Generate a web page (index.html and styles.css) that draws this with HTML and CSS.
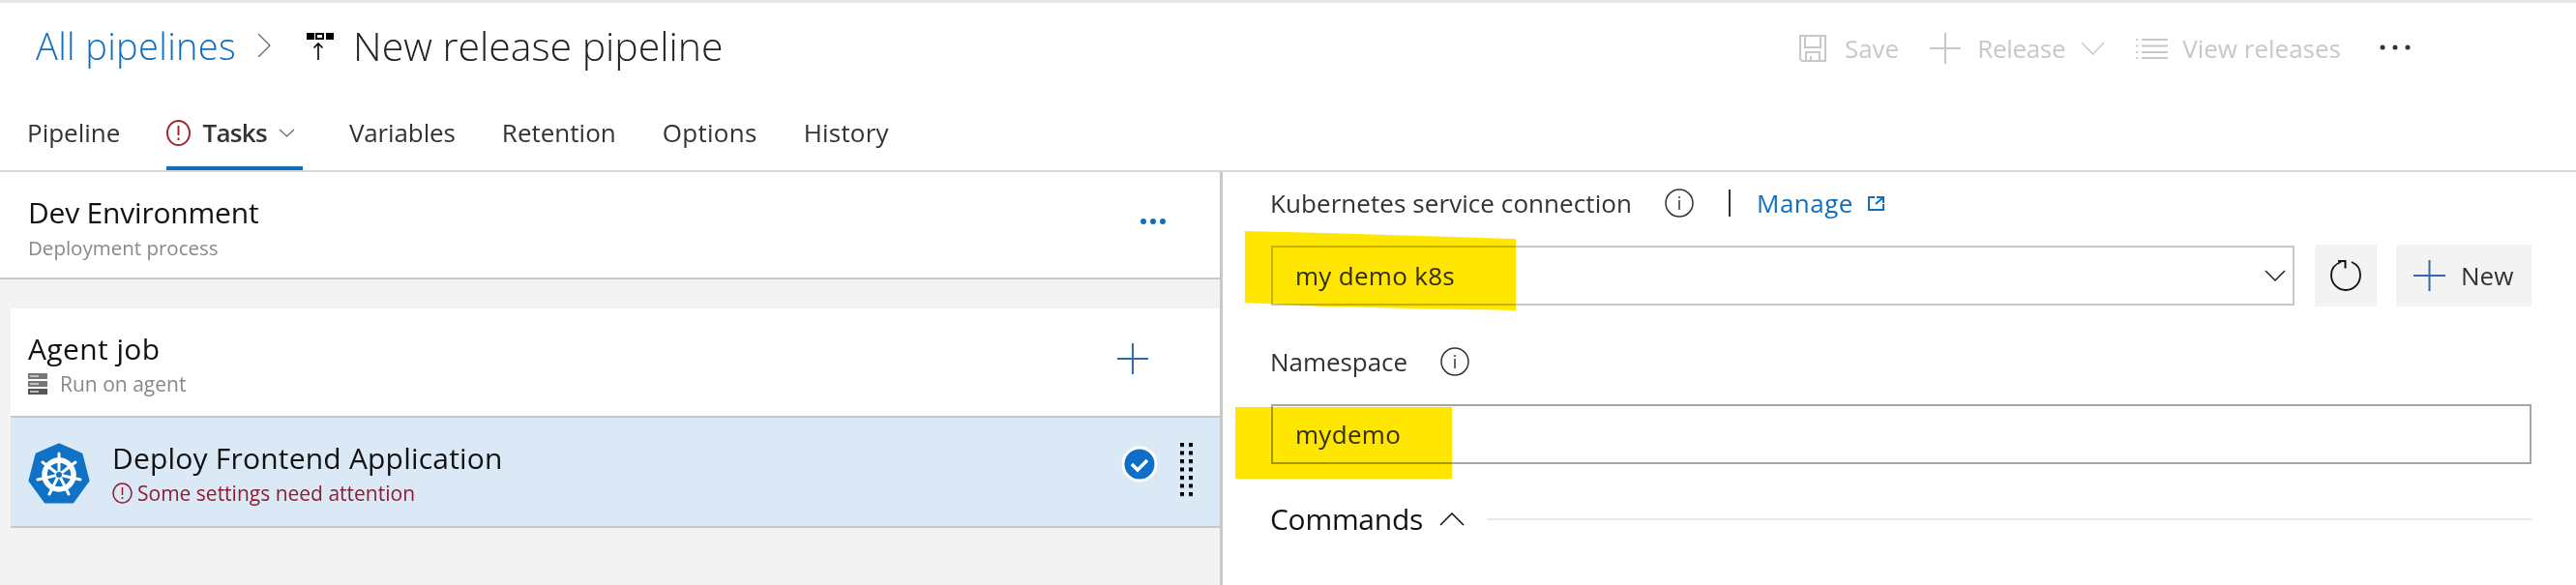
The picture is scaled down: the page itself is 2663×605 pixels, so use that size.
FILE: index.html
```html
<!DOCTYPE html>
<html lang="en">
<head>
    <title>New release pipeline</title>
    <link rel="stylesheet" href="styles.css">
</head>
<body>
    <!-- Header -->
    <header class="header">
        <div class="titlebar">
            <a class="crumb">All pipelines</a>
            <svg class="crumb-sep" width="14" height="24" viewBox="0 0 14 24"><path d="M1 0l12 12L1 24" fill="none" stroke="#666" stroke-width="1.3"/></svg>
            <svg class="pipe-icon" width="28" height="28" viewBox="0 0 28 28">
                <rect x="0" y="0" width="8" height="7" fill="#000"/>
                <rect x="10" y="1" width="7" height="5" fill="none" stroke="#000" stroke-width="2"/>
                <rect x="20" y="0" width="8" height="7" fill="#000"/>
                <path d="M12 28V11M7.5 15.5L12 11l4.500 4.500" fill="none" stroke="#000" stroke-width="1.6"/>
            </svg>
            <h1 class="title">New release pipeline</h1>

            <div class="toolbar">
                <svg class="tool-save" width="28" height="28" viewBox="0 0 28 28" fill="none" stroke="#c8c8c8" stroke-width="2">
                    <path d="M1 1h26v26H3l-2-2z"/>
                    <path d="M6 1v12h16V1"/>
                    <path d="M7 27V18h14v9M12 27v-5"/>
                </svg>
                <span class="tool-text tool-save-text">Save</span>
                <svg class="tool-plus" width="32" height="32" viewBox="0 0 32 32"><path d="M16 0v32M0 16h32" stroke="#c8c8c8" stroke-width="2"/></svg>
                <span class="tool-text tool-release-text">Release</span>
                <svg class="tool-chev" width="25" height="14" viewBox="0 0 25 14"><path d="M1 1l11.500 12L24 1" fill="none" stroke="#c8c8c8" stroke-width="1.500"/></svg>
                <svg class="tool-list" width="33" height="22" viewBox="0 0 33 22" stroke="#c8c8c8" stroke-width="2">
                    <path d="M0 2h3M0 8.500h3M0 15h3M0 21h3" stroke-dasharray="1.500 1"/>
                    <path d="M6 2h27M6 8.500h27M6 15h27M6 21h27"/>
                </svg>
                <span class="tool-text tool-view-text">View releases</span>
                <svg class="tool-more" width="32" height="6" viewBox="0 0 32 6" fill="#333"><circle cx="3" cy="3" r="2.500"/><circle cx="16" cy="3" r="2.500"/><circle cx="29" cy="3" r="2.500"/></svg>
            </div>
        </div>

        <!-- Tabs -->
        <nav class="tabs">
            <a class="tab tab-pipeline">Pipeline</a>
            <a class="tab tab-active">
                <svg width="25" height="27" viewBox="0 0 25 27"><ellipse cx="12.500" cy="13.500" rx="11.500" ry="12.500" fill="none" stroke="#a4262c" stroke-width="2"/><path d="M12.500 6v10M12.500 18.500v2.500" stroke="#a4262c" stroke-width="2"/></svg>
                <span class="tab-tasks">Tasks</span>
                <svg width="17" height="9" viewBox="0 0 17 9"><path d="M1 1l7.500 7L16 1" fill="none" stroke="#666" stroke-width="1.200"/></svg>
            </a>
            <a class="tab tab-variables">Variables</a>
            <a class="tab tab-retention">Retention</a>
            <a class="tab tab-options">Options</a>
            <a class="tab tab-history">History</a>
        </nav>
    </header>

    <main class="main">
        <!-- Left panel -->
        <section class="left">
            <div class="stage">
                <div class="rowtext">
                    <div class="row-title stage-title">Dev Environment</div>
                    <div class="row-sub stage-sub">Deployment process</div>
                </div>
                <svg width="26" height="6" viewBox="0 0 26 6" fill="#106ebe"><circle cx="3" cy="3" r="3"/><circle cx="13" cy="3" r="3"/><circle cx="23" cy="3" r="3"/></svg>
            </div>

            <div class="jobs">
                <div class="job">
                    <div class="rowtext">
                        <div class="row-title agent-title">Agent job</div>
                        <div class="row-sub agent-sub">
                            <svg width="20" height="22" viewBox="0 0 20 22">
                                <rect x="0" y="0" width="20" height="6" fill="#777"/>
                                <rect x="0" y="8" width="20" height="6" fill="#777"/>
                                <rect x="0" y="16" width="20" height="6" fill="#555"/>
                                <path d="M2 3h9M2 11h9M2 19h9" stroke="#ddd" stroke-width="1.500"/>
                            </svg>
                            <span>Run on agent</span>
                        </div>
                    </div>
                    <svg width="32" height="32" viewBox="0 0 32 32"><path d="M16 0v32M0 16h32" stroke="#2f6ba8" stroke-width="2"/></svg>
                </div>

                <div class="task">
                    <svg class="k8s" width="64" height="64" viewBox="0 0 64 64">
                        <path d="M32 2l23 10 7 27-16 22H18L2 39l7-27z" fill="#0f72c4" stroke="#0f72c4" stroke-width="3" stroke-linejoin="round"/>
                        <circle cx="32" cy="33" r="15" fill="none" stroke="#fff" stroke-width="5.500"/>
                        <g stroke="#fff" stroke-width="3" stroke-linecap="round">
                            <path d="M32 33V11M32 33l17-13M32 33l22 5M32 33l10 20M32 33L22 53M32 33l-22 5M32 33L15 20"/>
                        </g>
                        <circle cx="32" cy="33" r="3" fill="#0f72c4"/>
                    </svg>
                    <div class="rowtext">
                        <div class="row-title deploy-title">Deploy Frontend Application</div>
                        <div class="row-sub deploy-sub">
                            <svg width="21" height="22" viewBox="0 0 21 22"><ellipse cx="10.500" cy="11" rx="9.500" ry="10" fill="none" stroke="#8f1d2c" stroke-width="1.500"/><path d="M10.500 5v8M10.500 15v2" stroke="#8f1d2c" stroke-width="1.500"/></svg>
                            <span>Some settings need attention</span>
                        </div>
                    </div>
                    <svg class="check" width="38" height="38" viewBox="0 0 38 38">
                        <circle cx="19" cy="19" r="18.500" fill="#fff"/>
                        <circle cx="19" cy="19" r="15.500" fill="#0f6fc6"/>
                        <path d="M11 19l6 6 10-10" fill="none" stroke="#fff" stroke-width="3.500"/>
                    </svg>
                    <svg class="grip" width="13" height="56" viewBox="0 0 13 56">
                        <defs><pattern id="gripDots" width="9" height="8.500" patternUnits="userSpaceOnUse"><rect width="4" height="4" fill="#000"/></pattern></defs>
                        <rect width="13" height="56" fill="url(#gripDots)"/>
                    </svg>
                </div>
            </div>
        </section>

        <!-- Right panel -->
        <section class="right">
            <div class="label-row">
                <label class="field-label kube-label">Kubernetes service connection</label>
                <svg class="info" width="30" height="30" viewBox="0 0 30 30"><circle cx="15" cy="15" r="14" fill="none" stroke="#333" stroke-width="1.500"/><path d="M15 12v10M15 8v2" stroke="#333" stroke-width="1.500"/></svg>
                <span class="pipe-sep"></span>
                <a class="manage">Manage</a>
                <svg class="ext" width="17" height="15" viewBox="0 0 17 15" fill="none" stroke="#106ebe" stroke-width="2"><path d="M7 1H1v13h15V8M9 1h7v6M16 1L8 8"/></svg>
            </div>

            <div class="select-row">
                <div class="select">
                    <span class="select-value">my demo k8s</span>
                    <svg width="22" height="12" viewBox="0 0 22 12"><path d="M1 1l10 10L21 1" fill="none" stroke="#222" stroke-width="1.500"/></svg>
                </div>
                <button class="btn btn-refresh">
                    <svg width="34" height="34" viewBox="0 0 34 34" fill="none" stroke="#111" stroke-width="1.800"><path d="M23 3c6 2.500 9 7.500 9 13.500C32 25 25.500 32 17 32S2 25 2 16.500C2 10 6 5 12 3"/><path d="M9 2h7.500v7.500" stroke-width="2"/></svg>
                </button>
                <button class="btn btn-new">
                    <svg width="33" height="32" viewBox="0 0 33 32"><path d="M16.500 0v32M0 16h33" stroke="#2f6ba8" stroke-width="2"/></svg>
                    <span>New</span>
                </button>
            </div>

            <div class="label-row ns-row">
                <label class="field-label ns-label">Namespace</label>
                <svg class="info" width="30" height="30" viewBox="0 0 30 30"><circle cx="15" cy="15" r="14" fill="none" stroke="#333" stroke-width="1.500"/><path d="M15 12v10M15 8v2" stroke="#333" stroke-width="1.500"/></svg>
            </div>
            <div class="input"><span class="input-value">mydemo</span></div>

            <div class="section-head">
                <span class="section-title">Commands</span>
                <svg width="26" height="14" viewBox="0 0 26 14"><path d="M1 13L13 1l12 12" fill="none" stroke="#111" stroke-width="1.500"/></svg>
                <span class="section-line"></span>
            </div>

            <!-- Marcador amarelo por cima dos campos -->
            <div class="marker marker-select"></div>
            <div class="marker marker-input"></div>
        </section>
    </main>
</body>
</html>
```
FILE: styles.css
```css
/* Geral */
* {
    margin: 0;
    padding: 0;
    box-sizing: border-box;
    font-family: "Open Sans", "Noto Sans", sans-serif;
}

body {
    width: 2663px;
    height: 605px;
    overflow: hidden;
    background-color: #fff;
    color: #333;
}

svg {
    display: block;
    flex: none;
}

/* Header */
.header {
    height: 178px;
    border-top: 3px solid #e6e6e6;
    border-bottom: 2px solid #d8d8d8;
}

.titlebar {
    height: 94px;
    display: flex;
    align-items: center;
    padding: 0 0 6px 37px;
}

.crumb {
    font-size: 38px;
    font-weight: 300;
    line-height: 52px;
    letter-spacing: 0.33px;
    color: #106ebe;
}

.crumb-sep {
    margin-left: 22px;
}

.pipe-icon {
    margin-left: 37px;
    margin-top: 2px;
}

.title {
    margin-left: 20px;
    font-size: 41px;
    font-weight: 300;
    line-height: 52px;
    color: #222;
}

.toolbar {
    margin-left: auto;
    padding-right: 171px;
    padding-top: 6px;
    display: flex;
    align-items: center;
    color: #c8c8c8;
}

.tool-text {
    font-size: 26px;
    line-height: 36px;
}

.tool-save-text { margin-left: 19px; }
.tool-plus { margin-left: 32px; }
.tool-release-text { margin-left: 17px; letter-spacing: -0.32px; }
.tool-chev { margin-left: 16px; }
.tool-list { margin-left: 32px; }
.tool-view-text { margin-left: 15px; }
.tool-more { margin-left: 40px; margin-top: -2px; }

/* Tabs */
.tabs {
    display: flex;
    gap: 48px;
    height: 79px;
    padding-left: 28px;
}

.tab {
    display: flex;
    align-items: center;
    padding-top: 5px;
    border-bottom: 4px solid transparent;
    font-size: 26px;
    color: #333;
}

.tab-active {
    gap: 12px;
    padding-right: 8px;
    border-bottom-color: #106ebe;
}

.tab-tasks {
    font-weight: 600;
    letter-spacing: -0.7px;
}

.tab-variables { letter-spacing: -0.12px; }
.tab-options { letter-spacing: 0.29px; }
.tab-history { letter-spacing: 0.19px; }

/* Painel esquerdo */
.main {
    display: flex;
    height: 427px;
}

.left {
    width: 1264px;
    background-color: #f3f3f3;
    border-right: 3px solid #c8c8c8;
}

.stage {
    height: 111px;
    display: flex;
    justify-content: space-between;
    align-items: flex-start;
    padding: 0 56px 0 29px;
    background-color: #fff;
    border-bottom: 2px solid #c8c8c8;
}

.stage svg {
    margin-top: 48px;
}

.rowtext {
    padding-top: 22px;
}

.row-title {
    font-size: 30px;
    line-height: 40px;
    color: #111;
}

.row-sub {
    display: flex;
    align-items: center;
    font-size: 21px;
    line-height: 32px;
    color: #888;
}

.stage-title { letter-spacing: -0.2px; }
.stage-sub { font-size: 20.5px; }
.agent-title { letter-spacing: 0.4px; }
.deploy-title { letter-spacing: 0.2px; }

.agent-sub { gap: 13px; }

.deploy-sub {
    gap: 5px;
    color: #8f1d2c;
}

.jobs {
    margin: 30px 0 0 11px;
}

.job {
    height: 113px;
    display: flex;
    justify-content: space-between;
    align-items: flex-start;
    padding: 0 74px 0 18px;
    background-color: #fff;
    border-bottom: 2px solid #c8c8c8;
}

.job > svg {
    margin-top: 36px;
}

.task {
    height: 114px;
    display: flex;
    align-items: flex-start;
    padding: 0 28px 0 18px;
    background-color: #dbe8f6;
    border-bottom: 2px solid #c4c8ce;
}

.k8s {
    margin: 26px 23px 0 0;
}

.check {
    margin: 29px 0 0 auto;
}

.grip {
    margin: 26px 0 0 23px;
}

/* Painel direito */
.right {
    position: relative;
    flex: 1;
    padding: 14px 46px 0 50px;
}

.label-row {
    display: flex;
    align-items: center;
    height: 36px;
}

.field-label {
    margin-left: -1px;
    font-size: 26px;
    line-height: 36px;
    color: #333;
}

.kube-label { letter-spacing: 0.07px; }
.ns-label { letter-spacing: -0.06px; }

.info {
    margin-left: 34px;
}

.pipe-sep {
    width: 2px;
    height: 28px;
    margin-left: 36px;
    background-color: #333;
}

.manage {
    margin-left: 27px;
    font-size: 26px;
    letter-spacing: 0.5px;
    color: #106ebe;
}

.ext {
    margin-left: 15px;
}

.select-row {
    display: flex;
    align-items: center;
    margin-top: 25px;
    height: 64px;
}

.select {
    flex: 1;
    height: 62px;
    display: flex;
    align-items: center;
    justify-content: space-between;
    padding: 0 7px 0 23px;
    border: 2px solid #c8c8c8;
}

.select-value, .input-value {
    font-size: 26px;
    letter-spacing: 0.3px;
    color: #333;
}

.btn {
    height: 64px;
    border: none;
    background-color: #f3f3f3;
    display: flex;
    align-items: center;
    font-size: 26px;
    color: #333;
}

.btn-refresh {
    width: 64px;
    margin-left: 21px;
    justify-content: center;
}

.btn-new {
    width: 140px;
    margin-left: 20px;
    padding-left: 18px;
    gap: 16px;
}

.ns-row {
    margin-top: 39px;
}

.input {
    height: 62px;
    margin-top: 26px;
    display: flex;
    align-items: center;
    padding-left: 23px;
    border: 2px solid #a6a6a6;
}

.section-head {
    display: flex;
    align-items: center;
    margin-top: 37px;
    height: 40px;
}

.section-title {
    margin-left: -1px;
    font-size: 30px;
    line-height: 40px;
    letter-spacing: -0.28px;
    color: #111;
}

.section-head svg {
    margin-left: 17px;
}

.section-line {
    flex: 1;
    height: 2px;
    margin-left: 23px;
    background-color: #e8e8e8;
}

/* Marcador amarelo */
.marker {
    position: absolute;
    background-color: #ffe600;
    mix-blend-mode: multiply;
}

.marker-select {
    left: 23px;
    top: 61px;
    width: 280px;
    height: 82px;
    clip-path: polygon(0 0, 30% 2px, 100% 8px, 100% 100%, 30% 78px, 0 74px);
}

.marker-input {
    left: 13px;
    top: 243px;
    width: 224px;
    height: 74px;
}
```
